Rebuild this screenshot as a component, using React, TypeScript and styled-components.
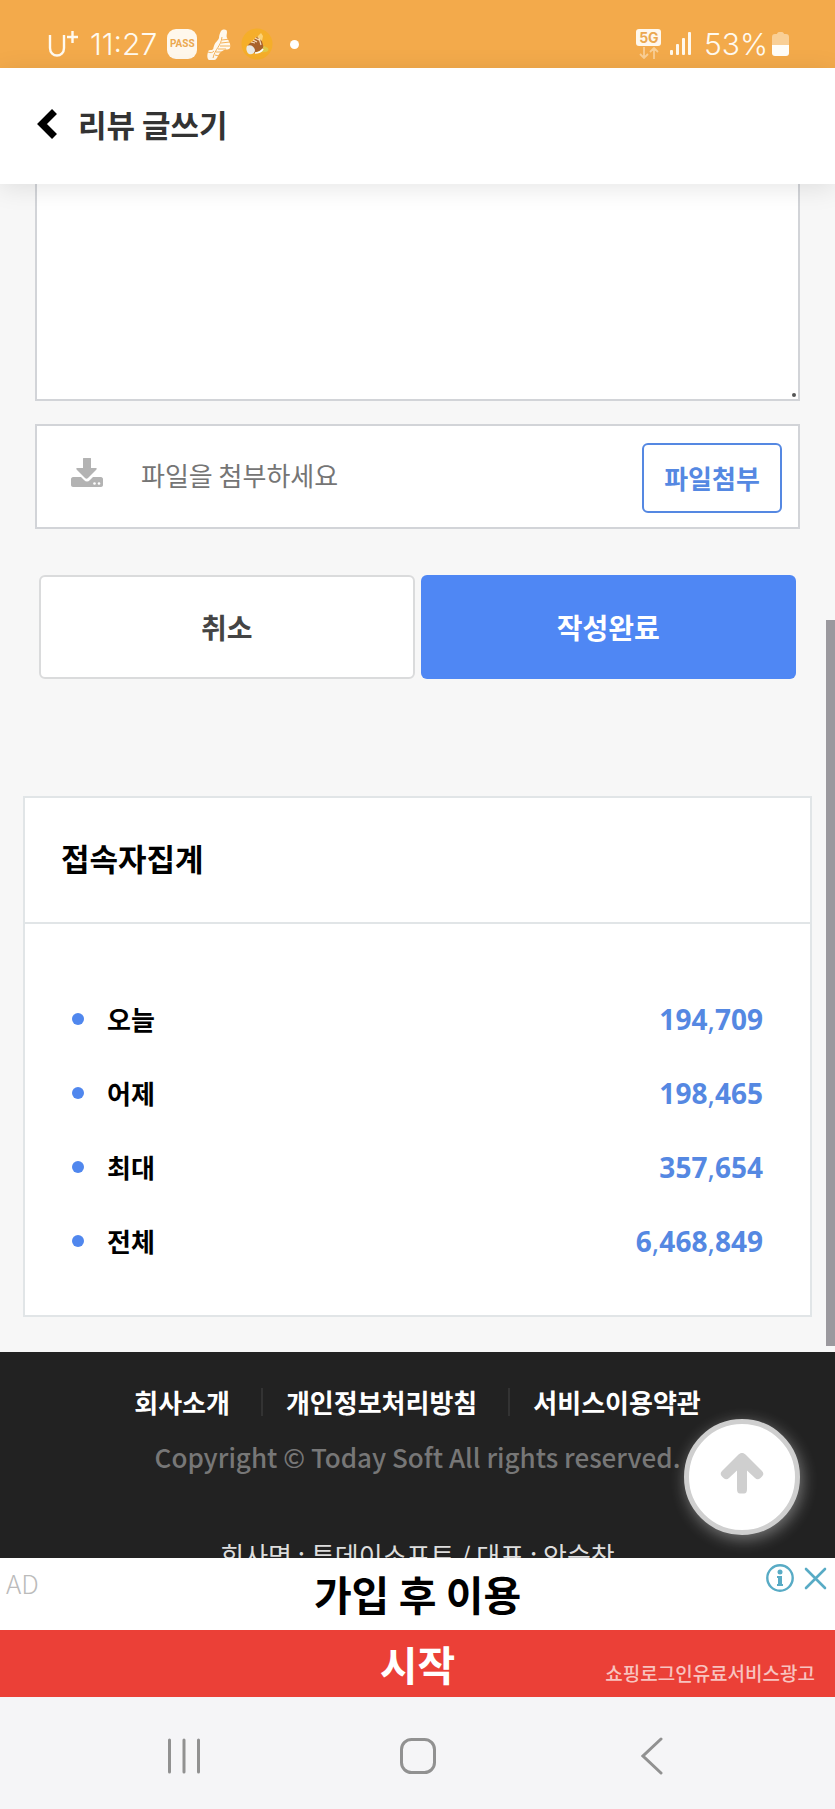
import React from 'react';
import styled, { createGlobalStyle, css } from 'styled-components';

const GlobalStyle = createGlobalStyle`
  *, *::before, *::after { box-sizing: border-box; }
  body {
    margin: 0;
    background: #f7f7f7;
    color: #000;
    font-family: "Noto Sans CJK KR", "Noto Sans", sans-serif;
  }
  button, input, textarea { font: inherit; }
  button { cursor: pointer; }
  a { color: inherit; text-decoration: none; }
`;

const Screen = styled.div`
  display: flex;
  flex-direction: column;
  height: 100vh;
`;

/* ---------- status bar ---------- */

const StatusBar = styled.div`
  display: flex;
  flex: none;
  justify-content: space-between;
  align-items: flex-end;
  height: 68px;
  padding: 0 46px 8px 48px;
  background: #f3aa4b;
  color: #fffaf0;
  font-family: Inter, sans-serif;
  font-size: 30px;
  line-height: 32px;
`;

const StatusGroup = styled.div<{ $gap: number }>`
  display: flex;
  align-items: center;
  height: 32px;
  gap: ${(p) => p.$gap}px;
`;

const Carrier = styled.span`
  display: flex;
`;

const Clock = styled.span`
  font-weight: 300;
`;

const BatteryLevel = styled.span`
  display: flex;
  align-items: center;
  gap: 4px;
  margin-left: 4px;
  font-weight: 300;
`;

const PassBadge = styled.span`
  display: flex;
  align-items: center;
  justify-content: center;
  width: 30px;
  height: 30px;
  border-radius: 9px;
  background: #fff8ec;
  color: #eba850;
  font: bold 10px/12px Roboto, sans-serif;
`;

const NoticeDot = styled.span`
  width: 9px;
  height: 9px;
  margin-left: 7px;
  border-radius: 50%;
  background: #fff;
`;

const SoleIcon = () => (
  <svg width="24" height="31" viewBox="0 0 24 31" aria-hidden="true">
    <path
      d="M14 2c2-2 6-2 6 1 0 2-1 4 0 6 2 3 4 6 3 10-1 2-4 1-6 2s-5 3-6 6c-1 2-2 4-4 4H2c-2-1-2-5-1-8 0-2 2-2 4-2 2-1 1-2 2-4 1-4 4-5 5-8 0-3 1-5 2-7z"
      fill="#fff8ec"
    />
    <path
      d="M15 11l8-1M14 14l9-1M13 17l10 0M11 20l8 0M9 23l6 0M8 26l4 1M6 29c2-9 8-12 9-21M1 23c3 1 4 1 6-1"
      stroke="#f3aa4b"
      strokeWidth="0.9"
      fill="none"
    />
  </svg>
);

const ShoeIcon = () => (
  <svg width="32" height="32" viewBox="0 0 32 32" aria-hidden="true">
    <circle cx="16" cy="16" r="15.5" fill="#f5ae2a" />
    <path d="M13 25l11-1c3 0 4-2 3-4l-4-2-11 4z" fill="#dfc84a" />
    <path d="M11 14l6-6 3 2 2 7c1 3-1 5-4 6l-5 2-6-7c0-2 2-3 4-4z" fill="#a9622c" />
    <path d="M16 9l4-4 2 3-1 5z" fill="#fbd277" />
    <path d="M10 14l4 1M12 12l4 2M14 10l4 2M18 10l2 7" stroke="#f6dcbb" strokeWidth="1.2" fill="none" />
    <path d="M6 18c3-2 7 0 8 4 0 3-3 5-6 4-3-2-3-6-2-8z" fill="#e9e9e6" />
    <path d="M14 25c4 0 6-1 8-4" stroke="#fff" strokeWidth="1.6" fill="none" />
  </svg>
);

const Network = styled.span`
  display: flex;
  flex-direction: column;
  align-items: center;
  width: 26px;
  gap: 1px;
`;

const NetworkLabel = styled.span`
  width: 25px;
  height: 17px;
  border-radius: 3px;
  background: #fff8ec;
  color: #eba850;
  font-size: 14px;
  font-weight: 700;
  line-height: 17px;
  text-align: center;
`;

const SignalIcon = () => (
  <svg width="22" height="24" viewBox="0 0 22 24" aria-hidden="true">
    <g fill="#fff8ec">
      <rect x="0" y="18" width="3" height="5" rx="1" />
      <rect x="6" y="12" width="3" height="11" rx="1" />
      <rect x="12" y="6" width="3" height="17" rx="1" />
      <rect x="18" y="0" width="3" height="23" rx="1" />
    </g>
  </svg>
);

const BatteryIcon = () => (
  <svg width="17" height="25" viewBox="0 0 17 25" aria-hidden="true">
    <path d="M5 2c0-1 1-2 2-2h3c1 0 2 1 2 2h2c2 0 3 1 3 3v8H0V5c0-2 1-3 3-3z" fill="#f9cf96" />
    <path d="M0 13h17v8c0 2-1 3-3 3H3c-2 0-3-1-3-3z" fill="#fffdf8" />
  </svg>
);

/* ---------- header ---------- */

const Header = styled.header`
  position: relative;
  z-index: 2;
  display: flex;
  flex: none;
  align-items: center;
  gap: 20px;
  height: 116px;
  padding: 0 36px 4px;
  background: #fff;
  box-shadow: 0 4px 24px rgba(0, 0, 0, 0.1);
`;

const IconButton = styled.button`
  display: flex;
  padding: 0;
  border: 0;
  background: none;
`;

const PageTitle = styled.h1`
  margin: 0;
  color: #333;
  font-size: 31px;
  font-weight: 700;
  line-height: 40px;
`;

/* ---------- scrolling content ---------- */

const Viewport = styled.div`
  position: relative;
  flex: 1;
  min-height: 0;
`;

const Scroller = styled.div`
  height: 100%;
  overflow-y: auto;
  scrollbar-width: none;
`;

const ScrollThumb = styled.div`
  position: absolute;
  top: 31.7%;
  right: 0;
  width: 9px;
  height: 52.9%;
  background: #9b999e;
`;

const Form = styled.form`
  display: flex;
  flex-direction: column;
  padding: 0 35px;
`;

const EditorWrap = styled.div`
  position: relative;
  display: flex;
`;

const Editor = styled.textarea`
  width: 100%;
  height: 217px;
  padding: 16px;
  border: 2px solid #d2d4d8;
  border-top: 0;
  border-radius: 0;
  background: #fff;
  outline: 0;
  resize: none;
`;

const Grip = styled.span`
  position: absolute;
  right: 4px;
  bottom: 4px;
  width: 4px;
  height: 4px;
  border-radius: 50%;
  background: #555;
`;

const FileBox = styled.div`
  display: flex;
  align-items: center;
  height: 105px;
  margin-top: 23px;
  padding: 2px 16px 0 34px;
  border: 2px solid #d2d4d8;
  background: #fff;
`;

const FileField = styled.input`
  flex: 1;
  min-width: 0;
  height: 60px;
  margin: 0 16px 0 38px;
  padding: 0 0 6px;
  border: 0;
  outline: 0;
  background: none;
  font-size: 26px;
  &::placeholder { color: #757575; opacity: 1; }
`;

const AttachButton = styled.button`
  width: 140px;
  height: 70px;
  padding: 0;
  border: 2px solid #5588e2;
  border-radius: 6px;
  background: #fff;
  color: #5588e2;
  font-size: 26px;
  font-weight: 700;
  line-height: 40px;
`;

const DriveDownIcon = () => (
  <svg width="32" height="40" viewBox="0 0 32 40" aria-hidden="true">
    <path
      d="M13 0h6c1 0 1 0 1 1v9h5c1 0 1 1 0 2l-8 8c-1 1-2 1-3 0l-8-8c-1-1-1-2 0-2h6V1c0-1 0-1 1-1z"
      fill="#b3b3b3"
    />
    <path
      d="M2 19h8l3 3c2 2 4 2 6 0l3-3h8c1 0 2 1 2 2v6c0 1-1 2-2 2H2c-1 0-2-1-2-2v-6c0-1 1-2 2-2z"
      fill="#b3b3b3"
    />
    <circle cx="23.5" cy="25.5" r="1.3" fill="#fff" />
    <circle cx="28" cy="25.5" r="1.3" fill="#fff" />
  </svg>
);

const Actions = styled.div`
  display: grid;
  grid-template-columns: 1fr 1fr;
  gap: 6px;
  margin-top: 46px;
  padding: 0 4px;
`;

const ActionButton = styled.button<{ $primary?: boolean }>`
  height: 104px;
  padding: 0;
  border-radius: 6px;
  font-size: 28px;
  font-weight: 700;
  line-height: 40px;
  ${(p) =>
    p.$primary
      ? css`
          border: 0;
          background: #4f87f4;
          color: #fff;
        `
      : css`
          border: 2px solid #dadbdc;
          background: #fff;
          color: #444;
        `}
`;

const Panel = styled.section`
  margin: 117px 23px 35px;
  border: 2px solid #e1e5e7;
  background: #fff;
`;

const PanelTitle = styled.h2`
  margin: 0;
  padding: 40px 36px 44px;
  border-bottom: 2px solid #e1e5e7;
  font-size: 31px;
  font-weight: 700;
  line-height: 40px;
`;

const Stats = styled.ul`
  display: flex;
  flex-direction: column;
  gap: 34px;
  margin: 0;
  padding: 75px 47px 54px;
  list-style: none;
`;

const Stat = styled.li`
  display: flex;
  align-items: center;
  height: 40px;
  &::before {
    content: "";
    width: 12px;
    height: 12px;
    margin-right: 23px;
    border-radius: 50%;
    background: #5087ee;
  }
`;

const StatLabel = styled.span`
  flex: 1;
  font-size: 26px;
  font-weight: 700;
  line-height: 40px;
`;

const StatValue = styled.span`
  color: #5588e2;
  font: 700 28px/40px "Noto Sans", sans-serif;
`;

const Comma = styled.span`
  font-weight: 400;
`;

/* ---------- site footer ---------- */

const Footer = styled.footer`
  display: flex;
  flex-direction: column;
  align-items: center;
  padding: 30px 16px 40px;
  background: #222;
  text-align: center;
`;

const FooterLinks = styled.nav`
  display: flex;
  align-items: center;
  color: #fff;
  font-size: 26px;
  font-weight: 700;
  line-height: 40px;
`;

const FooterLink = styled.a`
  position: relative;
  & + & {
    margin-left: 56px;
  }
  & + &::before {
    content: "";
    position: absolute;
    left: -25px;
    top: 6px;
    width: 2px;
    height: 28px;
    background: #333;
  }
`;

const Copyright = styled.p`
  margin: 15px 0 0;
  color: #777;
  font-size: 26px;
  font-weight: 500;
  line-height: 40px;
`;

const Company = styled.p`
  margin: 58px 0 0;
  color: #ddd;
  font-size: 26px;
  line-height: 40px;
`;

const TopButton = styled.button`
  position: absolute;
  right: 35px;
  bottom: 23px;
  display: flex;
  align-items: center;
  justify-content: center;
  width: 116px;
  height: 116px;
  padding: 0 0 8px;
  border: 5px solid #cfcfcf;
  border-radius: 50%;
  background: #fff;
  box-shadow: 2px 4px 16px rgba(255, 255, 255, 0.4);
`;

/* ---------- advertisement ---------- */

const Ad = styled.aside`
  position: relative;
  z-index: 1;
  flex: none;
  background: #fff;
  text-align: center;
  font-size: 41px;
  font-weight: 700;
  line-height: 60px;
`;

const AdHeadline = styled.a`
  display: block;
  height: 72px;
  padding: 5px 0;
`;

const AdStart = styled.a`
  display: block;
  height: 67px;
  padding-top: 3px;
  background: #eb4037;
  color: #fff;
`;

const AdMark = styled.span`
  position: absolute;
  left: 6px;
  top: 5px;
  color: #bbb;
  font-size: 26px;
  font-weight: 300;
  line-height: 40px;
`;

const AdSource = styled.span`
  position: absolute;
  right: 20px;
  bottom: 9px;
  color: #f8c3bf;
  font-size: 19px;
  font-weight: 500;
  line-height: 30px;
`;

const AdControls = styled.div`
  position: absolute;
  top: 6px;
  right: 8px;
  display: flex;
  align-items: center;
  gap: 10px;
`;

/* ---------- system navigation ---------- */

const SystemNav = styled.nav`
  display: grid;
  flex: none;
  grid-template-columns: 1fr 132px 1fr;
  justify-items: center;
  align-items: center;
  height: 112px;
  padding: 6px 0 0;
  background: #f5f5f7;
  & > :first-child { justify-self: end; margin-right: 151px; }
  & > :last-child { justify-self: start; margin-left: 157px; }
`;

const stats = [
  { label: '오늘', value: '194,709' },
  { label: '어제', value: '198,465' },
  { label: '최대', value: '357,654' },
  { label: '전체', value: '6,468,849' },
];

const links = ['회사소개', '개인정보처리방침', '서비스이용약관'];

const Count = ({ value }: { value: string }) => (
  <StatValue>
    {value.split(',').map((group, i) => (
      <React.Fragment key={i}>
        {i > 0 && <Comma>,</Comma>}
        {group}
      </React.Fragment>
    ))}
  </StatValue>
);

export default function App() {
  return (
    <Screen>
      <GlobalStyle />
      <StatusBar>
        <StatusGroup $gap={10}>
          <Carrier>
            <svg width="32" height="28" viewBox="0 0 32 28" role="img" aria-label="U+">
              <path
                d="M2 5v13c0 10 14 10 14 0V5M19 7h11M24.5 1v12"
                fill="none"
                stroke="#fffaf0"
                strokeWidth="2.4"
              />
            </svg>
          </Carrier>
          <Clock>11:27</Clock>
          <PassBadge>PASS</PassBadge>
          <SoleIcon />
          <ShoeIcon />
          <NoticeDot />
        </StatusGroup>
        <StatusGroup $gap={8}>
          <Network>
            <NetworkLabel>5G</NetworkLabel>
            <svg width="20" height="12" viewBox="0 0 20 12" aria-hidden="true">
              <path
                d="M5 0v11M1 7l4 4 4-4M15 12V1M11 5l4-4 4 4"
                fill="none"
                stroke="#f9cf96"
                strokeWidth="1.8"
              />
            </svg>
          </Network>
          <SignalIcon />
          <BatteryLevel>
            53%
            <BatteryIcon />
          </BatteryLevel>
        </StatusGroup>
      </StatusBar>

      <Header>
        <IconButton type="button" aria-label="뒤로">
          <svg width="22" height="32" viewBox="0 0 22 32" aria-hidden="true">
            <path d="M18.500 3.500L6 16l12.500 12.500" fill="none" stroke="#000" strokeWidth="7" />
          </svg>
        </IconButton>
        <PageTitle>리뷰 글쓰기</PageTitle>
      </Header>

      <Viewport>
        <Scroller>
          <Form onSubmit={(e) => e.preventDefault()}>
            <EditorWrap>
              <Editor aria-label="내용" />
              <Grip />
            </EditorWrap>
            <FileBox>
              <DriveDownIcon />
              <FileField aria-label="첨부 파일" placeholder="파일을 첨부하세요" readOnly />
              <AttachButton type="button">파일첨부</AttachButton>
            </FileBox>
            <Actions>
              <ActionButton type="button">취소</ActionButton>
              <ActionButton type="submit" $primary>작성완료</ActionButton>
            </Actions>
          </Form>

          <Panel>
            <PanelTitle>접속자집계</PanelTitle>
            <Stats>
              {stats.map((s) => (
                <Stat key={s.label}>
                  <StatLabel>{s.label}</StatLabel>
                  <Count value={s.value} />
                </Stat>
              ))}
            </Stats>
          </Panel>

          <Footer>
            <FooterLinks>
              {links.map((l) => (
                <FooterLink href="#" key={l}>{l}</FooterLink>
              ))}
            </FooterLinks>
            <Copyright>Copyright © Today Soft All rights reserved.</Copyright>
            <Company>회사명 : 투데이소프트 / 대표 : 안승찬</Company>
          </Footer>
        </Scroller>
        <ScrollThumb />
        <TopButton type="button" aria-label="맨 위로">
          <svg width="44" height="42" viewBox="0 0 44 42" aria-hidden="true">
            <path
              d="M22 1c1.500 0 2.500 .6 3.500 1.500L42 19c2 2 1.500 4 0 5.500l-1.500 1.500c-2 1.800-4 1.500-5.500 0l-8-7.500V37c0 3-1 4.500-3 4.500h-4c-2 0-3-1.500-3-4.500V18.500L9 26c-1.500 1.500-3.500 1.800-5.500 0L2 24.500C.5 23 0 21 2 19L18.500 2.500C19.500 1.600 20.500 1 22 1z"
              fill="#cfcfcf"
            />
          </svg>
        </TopButton>
      </Viewport>

      <Ad>
        <AdMark>AD</AdMark>
        <AdHeadline href="#">가입 후 이용</AdHeadline>
        <AdStart href="#">시작</AdStart>
        <AdSource>쇼핑로그인유료서비스광고</AdSource>
        <AdControls>
          <IconButton type="button" aria-label="광고 정보">
            <svg width="28" height="28" viewBox="0 0 28 28" aria-hidden="true">
              <circle cx="14" cy="14" r="12.7" fill="none" stroke="#58abc5" strokeWidth="2.4" />
              <circle cx="14" cy="8" r="2.5" fill="#58abc5" />
              <path d="M11 12h5v8h1v2h-6v-2h1v-6h-1z" fill="#58abc5" />
            </svg>
          </IconButton>
          <IconButton type="button" aria-label="광고 닫기">
            <svg width="23" height="23" viewBox="0 0 23 23" aria-hidden="true">
              <path d="M2 2l19 19M21 2L2 21" stroke="#58abc5" strokeWidth="2.6" strokeLinecap="round" />
            </svg>
          </IconButton>
        </AdControls>
      </Ad>

      <SystemNav>
        <IconButton type="button" aria-label="최근 앱">
          <svg width="34" height="36" viewBox="0 0 34 36" aria-hidden="true">
            <path d="M2.500 2v32M17 2v32M31.500 2v32" stroke="#919191" strokeWidth="3" strokeLinecap="round" />
          </svg>
        </IconButton>
        <IconButton type="button" aria-label="홈">
          <svg width="38" height="38" viewBox="0 0 38 38" aria-hidden="true">
            <rect x="2.5" y="2.5" width="33" height="33" rx="10" fill="none" stroke="#919191" strokeWidth="3" />
          </svg>
        </IconButton>
        <IconButton type="button" aria-label="뒤로 가기">
          <svg width="22" height="38" viewBox="0 0 22 38" aria-hidden="true">
            <path d="M20 2L2 19l18 17" fill="none" stroke="#919191" strokeWidth="3" strokeLinecap="round" />
          </svg>
        </IconButton>
      </SystemNav>
    </Screen>
  );
}
